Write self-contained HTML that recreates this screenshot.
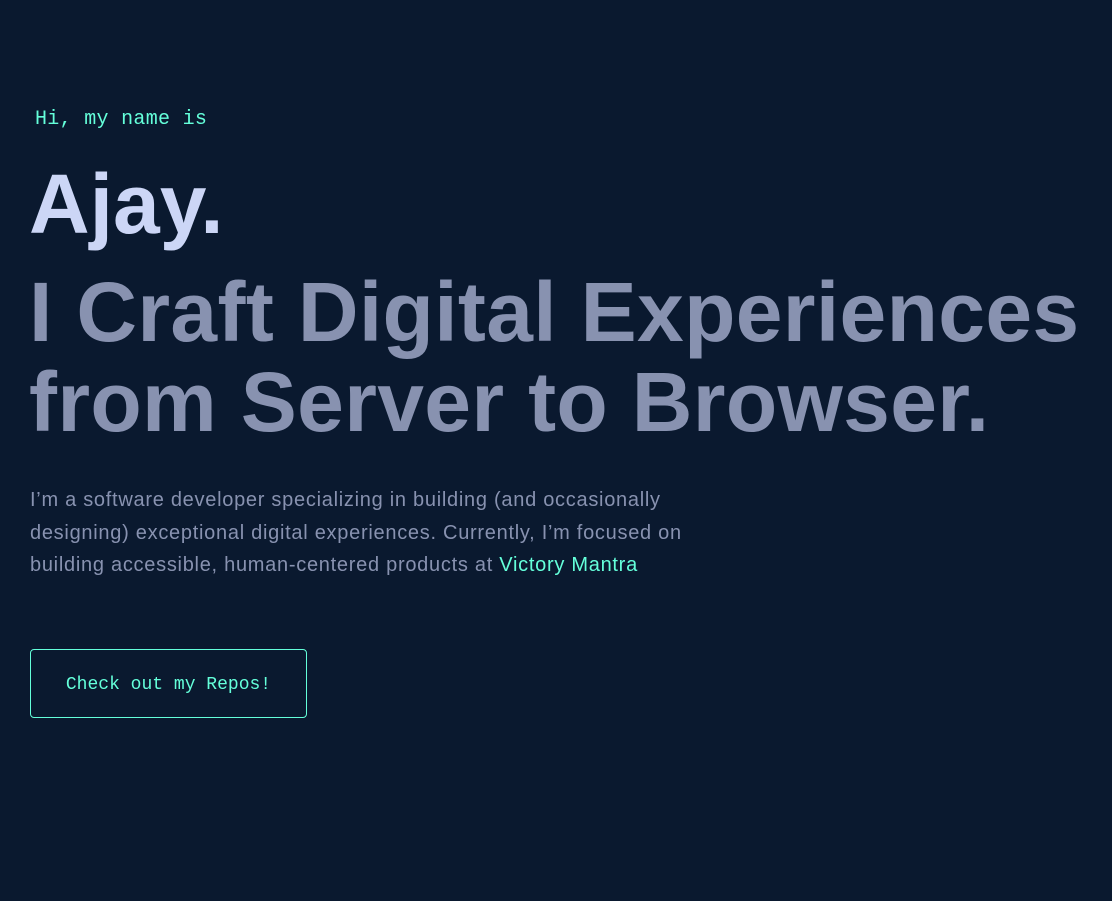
<!DOCTYPE html>
<html><head><meta charset="utf-8"><style>
html,body{margin:0;padding:0;background:#0a192f;width:1112px;height:901px;overflow:hidden}
.hi{position:absolute;left:35px;top:108px;font:20px "Liberation Mono",monospace;color:#64ffda;letter-spacing:0.3px;white-space:nowrap}
.name{position:absolute;left:29px;top:154px;font:bold 84px/100px "Liberation Sans",sans-serif;color:#ccd6f6;letter-spacing:0;white-space:nowrap}
.big{position:absolute;left:29px;top:267px;font:bold 84px/90px "Liberation Sans",sans-serif;color:#8892b0;white-space:nowrap;letter-spacing:0.35px}
.p{position:absolute;left:30px;top:484px;font:20px/32.5px "Liberation Sans",sans-serif;color:#8892b0;white-space:nowrap;letter-spacing:0.72px}
.p span{color:#64ffda}
.btn{position:absolute;left:30px;top:649px;width:275px;height:67px;border:1px solid #64ffda;border-radius:4px;color:#64ffda;font:18px/70px "Liberation Mono",monospace;text-align:center}
</style></head><body>
<div class="hi">Hi, my name is</div>
<div class="name">Ajay.</div>
<div class="big">I Craft Digital Experiences<br>from Server to Browser.</div>
<div class="p">I’m a software developer specializing in building (and occasionally<br>designing) exceptional digital experiences. Currently, I’m focused on<br>building accessible, human-centered products at <span>Victory Mantra</span></div>
<div class="btn">Check out my Repos!</div>
</body></html>
